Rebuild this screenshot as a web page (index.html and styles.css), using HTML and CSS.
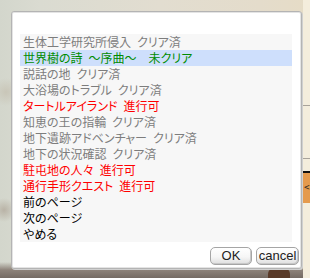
FILE: index.html
```html
<!DOCTYPE html>
<html lang="ja">
<head>
<meta charset="utf-8">
<link rel="stylesheet" href="styles.css">
</head>
<body>
<div class="scene">
  <div class="side-panel">
    <div class="side-line"></div>
    <div class="side-line"></div>
    <div class="side-btn"><span class="side-glyph">&lt;</span></div>
  </div>
  <div class="figure"></div>
  <div class="dialog">
    <ul class="list">
      <li class="row gray">生体工学研究所侵入 クリア済</li>
      <li class="row green sel">世界樹の詩 ～序曲～  未クリア</li>
      <li class="row gray">説話の地 クリア済</li>
      <li class="row gray">大浴場のトラブル クリア済</li>
      <li class="row red">タートルアイランド 進行可</li>
      <li class="row gray">知恵の王の指輪 クリア済</li>
      <li class="row gray">地下遺跡アドベンチャー クリア済</li>
      <li class="row gray">地下の状況確認 クリア済</li>
      <li class="row red">駐屯地の人々 進行可</li>
      <li class="row red">通行手形クエスト 進行可</li>
      <li class="row black">前のページ</li>
      <li class="row black">次のページ</li>
      <li class="row black">やめる</li>
    </ul>
    <div class="buttons">
      <button class="btn ok">OK</button>
      <button class="btn cancel">cancel</button>
    </div>
  </div>
</div>
</body>
</html>
```
FILE: styles.css
```css
html, body {
  margin: 0;
  padding: 0;
}
body {
  width: 310px;
  height: 278px;
  overflow: hidden;
  font-family: "Noto Sans CJK JP", "Liberation Sans", sans-serif;
}
.scene {
  position: relative;
  width: 310px;
  height: 278px;
  background:
    linear-gradient(180deg, rgba(0,0,0,0) 0, rgba(0,0,0,0) 262px, #8d8279 270px, #756b63 278px),
    radial-gradient(circle at 6px 92px, #c9c6b8 0, rgba(201,198,184,0) 14px),
    radial-gradient(circle at 4px 210px, #b9b3a6 0, rgba(185,179,166,0) 12px),
    linear-gradient(90deg, #d3d6cc 0, #dadbd1 40px, #e2ddd0 160px, #e4dccb 260px, #e6dcc6 310px);
  padding: 11px 8px 0 11px;
  box-sizing: border-box;
}
.side-panel {
  position: absolute;
  left: 303px;
  top: 0;
  width: 7px;
  height: 278px;
  background: #f4eddc;
  display: flex;
  flex-direction: column;
}
.side-line {
  height: 1px;
  background: #a9a39a;
  margin-top: 52px;
}
.side-line:first-child {
  margin-top: 105px;
}
.side-btn {
  margin-top: 12px;
  height: 30px;
  background: #e59a4c;
  border-top: 2px solid #111;
  position: relative;
}
.side-glyph {
  position: absolute;
  left: 1px;
  top: 6px;
  font-size: 10px;
  color: #222;
}
.figure {
  position: absolute;
  left: 268px;
  top: 268px;
  width: 22px;
  height: 10px;
  background: #5a3a28;
  border-radius: 6px 6px 0 0;
}
.dialog {
  position: relative;
  width: 291px;
  height: 258px;
  box-sizing: border-box;
  background: #fff;
  border: 1px solid #b4b4b4;
  border-radius: 3px;
  box-shadow: inset 0 0 0 1px #e4e4e4, 1px 1px 0 #d0d0d0;
  padding: 22px 9px 0 8px;
  display: flex;
  flex-direction: column;
}
.list {
  list-style: none;
  margin: 0;
  padding: 0;
  height: 208px;
  background: #f7f7f7;
  width: 272px;
}
.row {
  height: 16px;
  line-height: 16px;
  font-size: 12px;
  padding-left: 3px;
  white-space: pre;
  word-spacing: 3.3px;
  font-feature-settings: "palt";
}
.sel {
  background: #cedffc;
}
.gray { color: #7d7d7d; }
.green { color: #008c00; }
.red { color: #f00; }
.black { color: #000; }
.buttons {
  display: flex;
  justify-content: flex-end;
  gap: 4px;
  margin-top: 5px;
  margin-right: -7px;
}
.btn {
  height: 18px;
  padding: 0;
  border: 1px solid #a5a5a5;
  border-radius: 5px;
  background: linear-gradient(180deg, #ffffff 0, #f6f6f6 55%, #dedede 100%);
  box-shadow: inset -1px -1px 0 #c8c8c8;
  font-family: "Liberation Sans", Arial, sans-serif;
  font-size: 13px;
  color: #222;
  line-height: 16px;
}
.ok { width: 42px; }
.cancel { width: 43px; }
```
